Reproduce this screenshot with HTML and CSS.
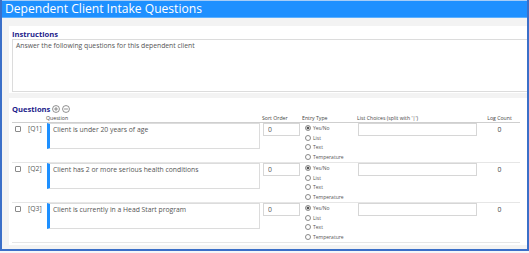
FILE: index.html
```html
<!DOCTYPE html>
<html lang="en">
<head>
  <meta charset="UTF-8">
  <title>Dependent Client Intake Questions</title>
  <link rel="stylesheet" href="styles.css">
</head>
<body>
  <div class="frame">
    <header class="title-bar">Dependent Client Intake Questions</header>

    <div class="content">
      <section class="panel instructions">
        <h2 class="label">Instructions</h2>
        <textarea class="instr-text" readonly>Answer the following questions for this dependent client</textarea>
      </section>

      <section class="panel questions">
        <h2 class="label">Questions
          <svg class="icon" viewBox="0 0 10 10"><circle cx="5" cy="5" r="4.3"/><path d="M5 2.6v4.8M2.6 5h4.8"/></svg>
          <svg class="icon" viewBox="0 0 10 10"><circle cx="5" cy="5" r="4.3"/><path d="M2.6 5h4.8"/></svg>
        </h2>

        <div class="grid head">
          <span></span>
          <span></span>
          <span>Question</span>
          <span>Sort Order</span>
          <span>Entry Type</span>
          <span>List Choices (split with '|')</span>
          <span class="center">Log Count</span>
        </div>

        <div class="grid row">
          <span><input type="checkbox" class="check"></span>
          <span class="qnum">[Q1]</span>
          <textarea class="qtext" readonly>Client is under 20 years of age</textarea>
          <span><input type="text" class="field sort" value="0"></span>
          <div class="radios">
            <label><input type="radio" name="t1" checked> Yes/No</label>
            <label><input type="radio" name="t1"> List</label>
            <label><input type="radio" name="t1"> Text</label>
            <label><input type="radio" name="t1"> Temperature</label>
          </div>
          <span><input type="text" class="field choices"></span>
          <span class="count">0</span>
        </div>

        <div class="grid row">
          <span><input type="checkbox" class="check"></span>
          <span class="qnum">[Q2]</span>
          <textarea class="qtext" readonly>Client has 2 or more serious health conditions</textarea>
          <span><input type="text" class="field sort" value="0"></span>
          <div class="radios">
            <label><input type="radio" name="t2" checked> Yes/No</label>
            <label><input type="radio" name="t2"> List</label>
            <label><input type="radio" name="t2"> Text</label>
            <label><input type="radio" name="t2"> Temperature</label>
          </div>
          <span><input type="text" class="field choices"></span>
          <span class="count">0</span>
        </div>

        <div class="grid row last">
          <span><input type="checkbox" class="check"></span>
          <span class="qnum">[Q3]</span>
          <textarea class="qtext" readonly>Client is currently in a Head Start program</textarea>
          <span><input type="text" class="field sort" value="0"></span>
          <div class="radios">
            <label><input type="radio" name="t3" checked> Yes/No</label>
            <label><input type="radio" name="t3"> List</label>
            <label><input type="radio" name="t3"> Text</label>
            <label><input type="radio" name="t3"> Temperature</label>
          </div>
          <span><input type="text" class="field choices"></span>
          <span class="count">0</span>
        </div>
      </section>
    </div>
  </div>
</body>
</html>
```

FILE: styles.css
```css
body {
  margin: 0;
  background: #f4f6f9;
  font-family: 'Open Sans', 'Noto Sans', sans-serif;
  color: #444;
}
.frame {
  width: 529px;
  height: 251px;
  box-sizing: border-box;
  border: 2px solid #3b6fc8;
  border-top: none;
  background: #f3f3f3;
  overflow: hidden;
}
.title-bar {
  height: 18px;
  box-sizing: border-box;
  background: #1e90ff;
  border-top: 1px solid #a6cdf7;
  border-bottom: 1px solid #5cb0ff;
  color: #fff;
  font-size: 12.1px;
  line-height: 16px;
  margin: 0 -2px;
  padding-left: 5px;
}
.content {
  padding: 8px 0 4px 7px;
}
.panel {
  background: #fff;
}
.label {
  margin: 0;
  font-size: 7.6px;
  font-weight: bold;
  color: #1c1c8a;
  display: flex;
  align-items: center;
}
.instructions {
  height: 67px;
  padding: 3px 0 0 3px;
  box-sizing: border-box;
}
.instructions .label {
  height: 10px;
}
.instr-text {
  display: block;
  width: calc(100% + 2px);
  height: 53px;
  box-sizing: border-box;
  margin: 0;
  border: 1px solid #dcdcdc;
  padding: 2px 3px;
  font-family: inherit;
  font-size: 6.8px;
  line-height: 8px;
  color: #555;
  resize: none;
  outline: none;
}
.questions {
  margin-top: 5px;
  height: 147px;
  padding: 5px 7px 0 3px;
  box-sizing: border-box;
}
.questions .label {
  height: 12px;
}
.icon {
  width: 8px;
  height: 8px;
  margin-left: 2px;
  fill: none;
  stroke: #666;
  stroke-width: 0.9;
}
.grid {
  display: grid;
  grid-template-columns: 16px 18px 216px 40px 55px 122px 41px;
}
.head {
  font-size: 5.2px;
  line-height: 7px;
  height: 7px;
  border-bottom: 1px solid #cfcfcf;
  color: #444;
}
.center {
  text-align: center;
}
.row {
  height: 40px;
  box-sizing: border-box;
  border-bottom: 1px solid #e6e6e6;
  font-size: 6.8px;
}
.check {
  appearance: none;
  width: 6px;
  height: 6px;
  margin: 3px 0 0 3px;
  border: 1px solid #8a8a8a;
  border-radius: 1px;
  background: #fff;
}
.qnum {
  padding-top: 2px;
  line-height: 8px;
  color: #555;
}
.qtext {
  margin: 0 2px 0 1px;
  height: 26px;
  box-sizing: border-box;
  border: 1px solid #dcdcdc;
  border-left: 3px solid #1e90ff;
  padding: 2px 3px;
  font-family: inherit;
  font-size: 6.8px;
  line-height: 8px;
  color: #555;
  resize: none;
  outline: none;
}
.field {
  display: block;
  box-sizing: border-box;
  height: 13px;
  margin: 0;
  border: 1px solid #d6d6d6;
  padding: 0 4px;
  font-family: inherit;
  font-size: 6.8px;
  color: #555;
  outline: none;
}
.sort {
  width: 37px;
  margin-left: 1px;
}
.choices {
  width: 119px;
  margin-left: 1px;
}
.radios {
  display: flex;
  flex-direction: column;
  padding-left: 3px;
}
.radios label {
  height: 9.75px;
  display: flex;
  align-items: center;
  font-size: 5px;
  color: #555;
}
.radios input {
  appearance: none;
  width: 6px;
  height: 6px;
  margin: 0 2px 0 0;
  border: 1px solid #8a8a8a;
  border-radius: 50%;
  background: #fff;
}
.radios input:checked {
  background: radial-gradient(circle, #555 0 35%, #d4d4d4 45%);
}
.count {
  text-align: center;
  padding-top: 3px;
  line-height: 7px;
  color: #444;
}
```
